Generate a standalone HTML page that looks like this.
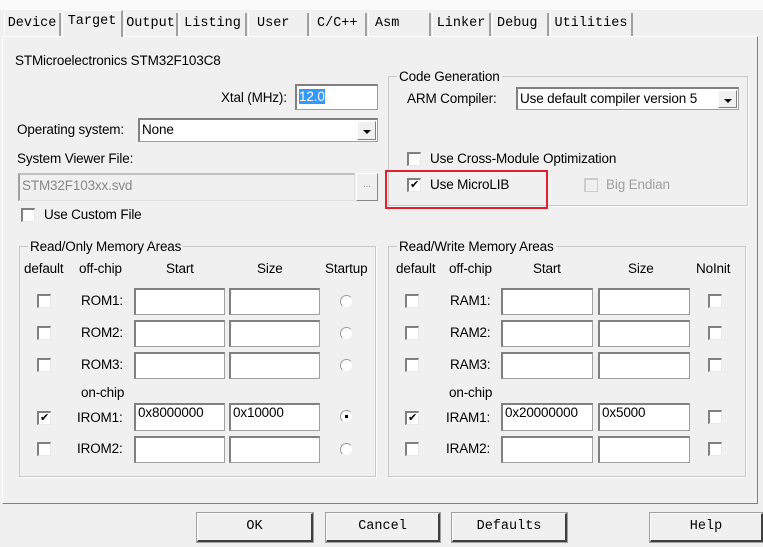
<!DOCTYPE html>
<html><head><meta charset="utf-8"><style>
*{box-sizing:border-box;margin:0;padding:0}
body{width:763px;height:547px;background:#f0f0f0;position:relative;overflow:hidden;font-family:"Liberation Sans",Arial,sans-serif;font-size:13.5px;color:#000;letter-spacing:-0.15px}
.a{position:absolute;white-space:nowrap}
.t{position:absolute;line-height:14px;white-space:nowrap}
.tab{position:absolute;top:13px;height:23px;font-family:"Liberation Mono",monospace;font-size:13.5px;letter-spacing:0;padding-top:3px;text-align:center;border-right:2px solid #a0a0a0;border-left:1px solid #fff}
.panel{position:absolute;left:2px;top:36px;width:756px;height:468px;border:1px solid #fff;border-right:1px solid #808080;border-bottom:1px solid #808080;background:#f0f0f0}
.box{position:absolute;background:#fff;border:1px solid #a0a0a0;border-top:2px solid #808080;border-left:2px solid #808080;padding:1px 2px;line-height:20px}
.cb{position:absolute;width:14px;height:14px;background:#fff;border:1px solid #e8e8e8;border-top:2px solid #808080;border-left:2px solid #808080;font-size:11px;line-height:10px;text-align:center}
.rd{position:absolute;width:13px;height:13px;border-radius:50%;background:#fff;border:1px solid #999;border-right-color:#eee;border-bottom-color:#eee}
.grp{position:absolute;border:1px solid #c8c8c8;box-shadow:1px 1px 0 #fff}
.gt{position:absolute;background:#f0f0f0;padding:0 2px;top:-8px;left:8px;white-space:nowrap}
.btn{position:absolute;top:513px;height:29px;border:1px solid #fff;border-right:2px solid #404040;border-bottom:2px solid #404040;outline:1px solid #a0a0a0;font-family:"Liberation Mono",monospace;font-size:13.5px;letter-spacing:0;text-align:center;line-height:26px;background:#f0f0f0}
.arr{position:absolute;right:1px;top:1px;width:19px;bottom:1px;background:#f0f0f0;border:1px solid #fff;border-right-color:#808080;border-bottom-color:#808080}
.arr:after{content:"";position:absolute;left:5px;top:8px;border-left:4px solid transparent;border-right:4px solid transparent;border-top:4px solid #000}
</style></head><body>
<div class="a" style="left:0;top:0;width:763px;height:10px;background:#fafafa"></div>
<div class="panel"></div>
<div class="tab" style="left:4px;width:57px">Device</div>
<div class="tab" style="left:62px;top:10px;height:27px;width:61px;background:#f0f0f0;border-top:1px solid #fff;z-index:2">Target</div>
<div class="tab" style="left:124px;width:54px">Output</div>
<div class="tab" style="left:179px;width:68px">Listing</div>
<div class="tab" style="left:248px;width:61px;text-align:left;padding-left:8px">User</div>
<div class="tab" style="left:310px;width:57px;text-align:left;padding-left:6px">C/C++</div>
<div class="tab" style="left:368px;width:63px;text-align:left;padding-left:6px">Asm</div>
<div class="tab" style="left:432px;width:59px">Linker</div>
<div class="tab" style="left:492px;width:57px;text-align:left;padding-left:4px">Debug</div>
<div class="tab" style="left:550px;width:83px">Utilities</div>

<div class="t" style="left:15px;top:54px">STMicroelectronics STM32F103C8</div>
<div class="t" style="left:221px;top:91px">Xtal (MHz):</div>
<div class="box" style="left:295px;top:84px;width:83px;height:26px"><span style="background:#3399ff;color:#fff">12.0</span></div>
<div class="t" style="left:17px;top:123px">Operating system:</div>
<div class="box" style="left:138px;top:118px;width:240px;height:24px;line-height:18px">None<div class="arr"></div></div>
<div class="t" style="left:17px;top:152px">System Viewer File:</div>
<div class="box" style="left:18px;top:173px;width:337px;height:28px;background:#f0f0f0;color:#888;border-color:#c0c0c0 #e0e0e0 #e0e0e0 #a0a0a0">STM32F103xx.svd</div>
<div class="a" style="left:356px;top:173px;width:22px;height:28px;border:1px solid #fff;border-right-color:#888;border-bottom-color:#888;color:#999;text-align:center;line-height:22px;font-size:10px">...</div>
<div class="cb" style="left:21px;top:208px"></div>
<div class="t" style="left:44px;top:208px">Use Custom File</div>

<div class="grp" style="left:19px;top:246px;width:357px;height:231px"><div class="gt">Read/Only Memory Areas</div></div>
<div class="t" style="left:24px;top:262px">default</div>
<div class="t" style="left:79px;top:262px">off-chip</div>
<div class="t" style="left:166px;top:262px">Start</div>
<div class="t" style="left:257px;top:262px">Size</div>
<div class="t" style="left:325px;top:262px">Startup</div>
<div class="cb" style="left:37px;top:294px"></div><div class="t" style="left:81px;top:294px">ROM1:</div>
<div class="box" style="left:134px;top:288px;width:91px;height:27px"></div><div class="box" style="left:229px;top:288px;width:91px;height:27px"></div><div class="rd" style="left:340px;top:295px"></div>
<div class="cb" style="left:37px;top:326px"></div><div class="t" style="left:81px;top:326px">ROM2:</div>
<div class="box" style="left:134px;top:320px;width:91px;height:27px"></div><div class="box" style="left:229px;top:320px;width:91px;height:27px"></div><div class="rd" style="left:340px;top:327px"></div>
<div class="cb" style="left:37px;top:358px"></div><div class="t" style="left:81px;top:358px">ROM3:</div>
<div class="box" style="left:134px;top:352px;width:91px;height:27px"></div><div class="box" style="left:229px;top:352px;width:91px;height:27px"></div><div class="rd" style="left:340px;top:359px"></div>
<div class="t" style="left:81px;top:386px">on-chip</div>
<div class="cb" style="left:37px;top:411px">&#10004;</div><div class="t" style="left:77px;top:411px">IROM1:</div>
<div class="box" style="left:134px;top:403px;width:91px;height:28px;line-height:14px">0x8000000</div><div class="box" style="left:229px;top:403px;width:91px;height:28px;line-height:14px">0x10000</div><div class="rd" style="left:340px;top:410px"><div style="width:3px;height:3px;background:#000;margin:4px"></div></div>
<div class="cb" style="left:37px;top:442px"></div><div class="t" style="left:77px;top:442px">IROM2:</div>
<div class="box" style="left:134px;top:436px;width:91px;height:27px"></div><div class="box" style="left:229px;top:436px;width:91px;height:27px"></div><div class="rd" style="left:340px;top:443px"></div>

<div class="grp" style="left:388px;top:76px;width:360px;height:130px"><div class="gt">Code Generation</div></div>
<div class="t" style="left:407px;top:92px">ARM Compiler:</div>
<div class="box" style="left:516px;top:87px;width:223px;height:23px;line-height:17px">Use default compiler version 5<div class="arr"></div></div>
<div class="cb" style="left:407px;top:152px"></div><div class="t" style="left:430px;top:152px">Use Cross-Module Optimization</div>
<div class="cb" style="left:407px;top:178px">&#10004;</div><div class="t" style="left:430px;top:178px">Use MicroLIB</div>
<div class="cb" style="left:584px;top:178px;background:#f0f0f0;border-color:#ccc"></div><div class="t" style="left:606px;top:178px;color:#a0a0a0">Big Endian</div>
<div class="a" style="left:385px;top:170px;width:163px;height:39px;border:2px solid #e0202a"></div>

<div class="grp" style="left:388px;top:246px;width:358px;height:231px"><div class="gt">Read/Write Memory Areas</div></div>
<div class="t" style="left:396px;top:262px">default</div>
<div class="t" style="left:449px;top:262px">off-chip</div>
<div class="t" style="left:533px;top:262px">Start</div>
<div class="t" style="left:628px;top:262px">Size</div>
<div class="t" style="left:696px;top:262px">NoInit</div>
<div class="cb" style="left:405px;top:294px"></div><div class="t" style="left:450px;top:294px">RAM1:</div>
<div class="box" style="left:501px;top:288px;width:92px;height:27px"></div><div class="box" style="left:598px;top:288px;width:92px;height:27px"></div><div class="cb" style="left:708px;top:294px"></div>
<div class="cb" style="left:405px;top:326px"></div><div class="t" style="left:450px;top:326px">RAM2:</div>
<div class="box" style="left:501px;top:320px;width:92px;height:27px"></div><div class="box" style="left:598px;top:320px;width:92px;height:27px"></div><div class="cb" style="left:708px;top:326px"></div>
<div class="cb" style="left:405px;top:358px"></div><div class="t" style="left:450px;top:358px">RAM3:</div>
<div class="box" style="left:501px;top:352px;width:92px;height:27px"></div><div class="box" style="left:598px;top:352px;width:92px;height:27px"></div><div class="cb" style="left:708px;top:358px"></div>
<div class="t" style="left:449px;top:386px">on-chip</div>
<div class="cb" style="left:405px;top:411px">&#10004;</div><div class="t" style="left:446px;top:411px">IRAM1:</div>
<div class="box" style="left:501px;top:403px;width:92px;height:28px;line-height:14px">0x20000000</div><div class="box" style="left:598px;top:403px;width:92px;height:28px;line-height:14px">0x5000</div><div class="cb" style="left:708px;top:410px"></div>
<div class="cb" style="left:405px;top:442px"></div><div class="t" style="left:446px;top:442px">IRAM2:</div>
<div class="box" style="left:501px;top:436px;width:92px;height:27px"></div><div class="box" style="left:598px;top:436px;width:92px;height:27px"></div><div class="cb" style="left:708px;top:442px"></div>

<div class="btn" style="left:197px;width:116px">OK</div>
<div class="btn" style="left:326px;width:114px">Cancel</div>
<div class="btn" style="left:452px;width:115px">Defaults</div>
<div class="btn" style="left:650px;width:113px">Help</div>
</body></html>
